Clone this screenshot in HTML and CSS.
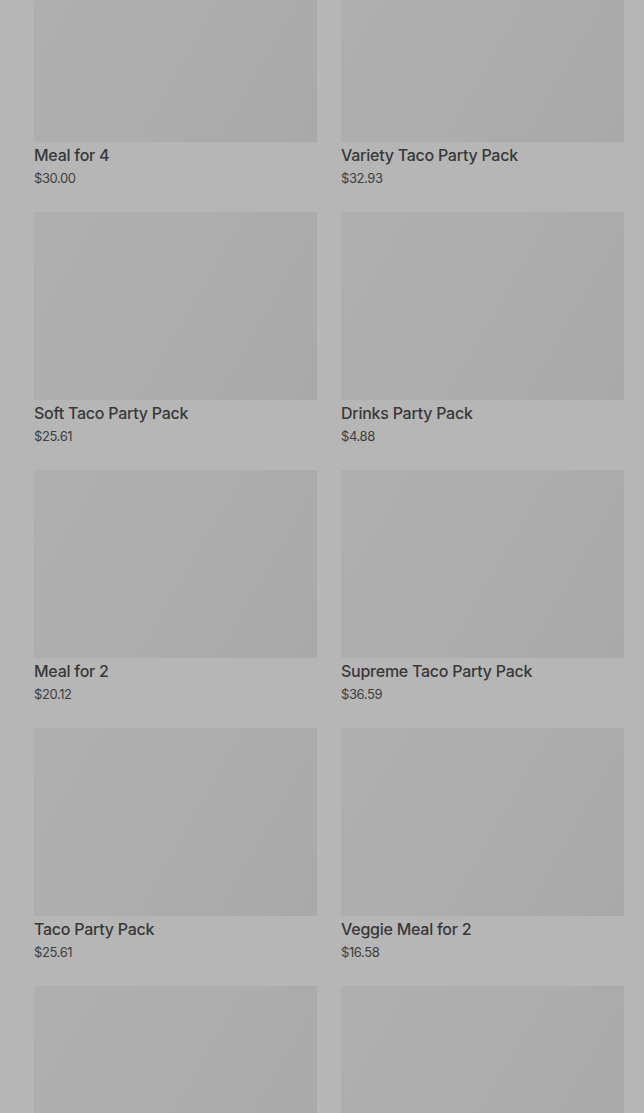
FILE: index.html
```html
<!DOCTYPE html>
<html lang="en">
<head>
    <meta charset="UTF-8">
    <meta name="viewport" content="width=device-width, initial-scale=1.0">
    <title>Party Packs</title>
    <link rel="stylesheet" href="styles.css">
</head>
<body>
    <div class="menu">
        <div class="item">
            <div class="photo"></div>
            <h3>Meal for 4</h3>
            <p class="price">$30.00</p>
        </div>
        <div class="item">
            <div class="photo"></div>
            <h3>Variety Taco Party Pack</h3>
            <p class="price">$32.93</p>
        </div>
        <div class="item">
            <div class="photo"></div>
            <h3>Soft Taco Party Pack</h3>
            <p class="price">$25.61</p>
        </div>
        <div class="item">
            <div class="photo"></div>
            <h3>Drinks Party Pack</h3>
            <p class="price">$4.88</p>
        </div>
        <div class="item">
            <div class="photo"></div>
            <h3>Meal for 2</h3>
            <p class="price">$20.12</p>
        </div>
        <div class="item">
            <div class="photo"></div>
            <h3>Supreme Taco Party Pack</h3>
            <p class="price">$36.59</p>
        </div>
        <div class="item">
            <div class="photo"></div>
            <h3>Taco Party Pack</h3>
            <p class="price">$25.61</p>
        </div>
        <div class="item">
            <div class="photo"></div>
            <h3>Veggie Meal for 2</h3>
            <p class="price">$16.58</p>
        </div>
        <div class="item">
            <div class="photo"></div>
        </div>
        <div class="item">
            <div class="photo"></div>
        </div>
    </div>
</body>
</html>
```

FILE: styles.css
```css
* {
    margin: 0;
    padding: 0;
    box-sizing: border-box;
}

body {
    font-family: Inter, "Noto Sans", sans-serif;
    background-color: #b6b6b6;
    color: #383838;
    height: 1113px;
    overflow: hidden;
}

.menu {
    display: grid;
    grid-template-columns: 283px 283px;
    column-gap: 24px;
    row-gap: 26px;
    padding: 0 20px 0 34px;
    margin-top: -46px;
}

.photo {
    height: 188px;
    background: linear-gradient(120deg, #afafaf 0%, #adadad 50%, #a9a9a9 100%);
}

.item h3 {
    font-size: 16px;
    font-weight: 500;
    line-height: 20px;
    margin-top: 3px;
    letter-spacing: -0.25px;
}

.price {
    font-size: 13px;
    font-weight: 400;
    line-height: 16px;
    margin-top: 5px;
    letter-spacing: -0.4px;
    color: #3e3e3e;
}
```
